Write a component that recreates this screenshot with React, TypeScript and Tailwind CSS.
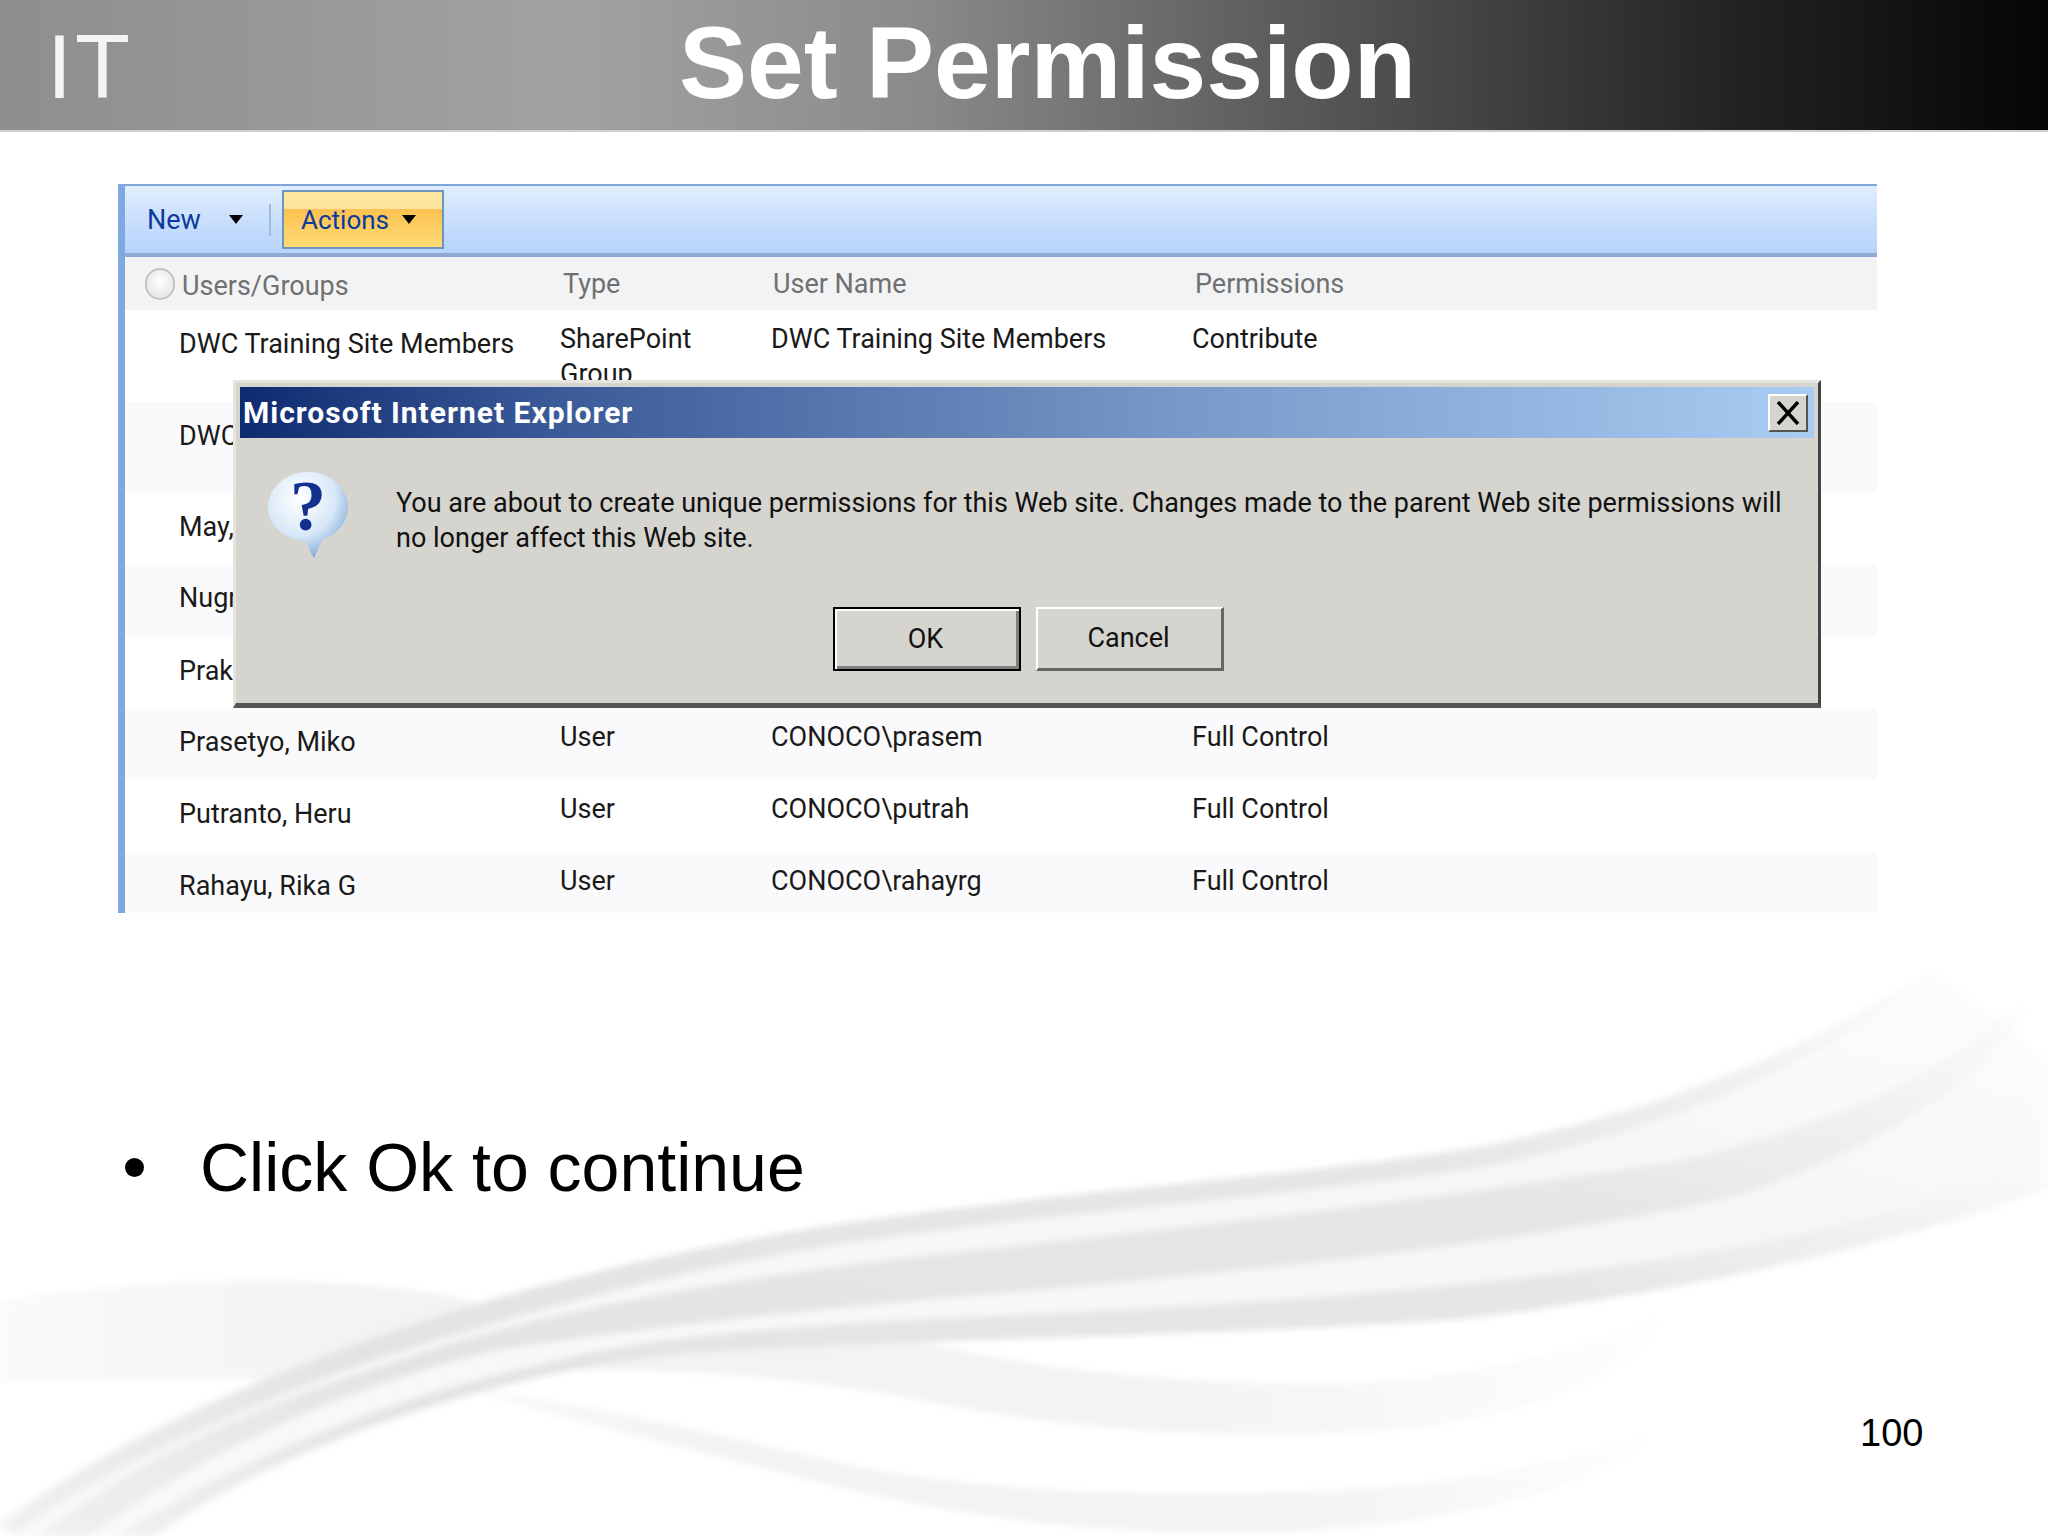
import React from "react";

const Arrow = () => (
  <svg width="16" height="12" viewBox="0 0 16 12" className="shrink-0">
    <polygon points="1,1 15,1 8,10" fill="#000" />
  </svg>
);

type Row = { name: string; type?: string; user?: string; perm?: string; h: string; alt: boolean };

const rows: Row[] = [
  { name: "DWC Training Site Members", type: "SharePoint Group", user: "DWC Training Site Members", perm: "Contribute", h: "h-[92px]", alt: false },
  { name: "DWC", h: "h-[91px]", alt: true },
  { name: "May,", h: "h-[71px]", alt: false },
  { name: "Nugr", h: "h-[73px]", alt: true },
  { name: "Prak", h: "h-[71px]", alt: false },
  { name: "Prasetyo, Miko", type: "User", user: "CONOCO\\prasem", perm: "Full Control", h: "h-[72px]", alt: true },
  { name: "Putranto, Heru", type: "User", user: "CONOCO\\putrah", perm: "Full Control", h: "h-[72px]", alt: false },
  { name: "Rahayu, Rika G", type: "User", user: "CONOCO\\rahayrg", perm: "Full Control", h: "h-[61px]", alt: true },
];

const Waves = () => (
  <svg
    className="absolute left-0 bottom-0 w-[2048px] h-[636px]"
    viewBox="0 0 1568 1568"
    preserveAspectRatio="none"
  >
    <defs>
      <linearGradient id="g1" x1="0" y1="1" x2="1" y2="0">
        <stop offset="0" stopColor="#f0f0f2" />
        <stop offset="0.25" stopColor="#e3e3e5" />
        <stop offset="0.7" stopColor="#e6e6e8" />
        <stop offset="1" stopColor="#fbfbfc" />
      </linearGradient>
      <linearGradient id="g2" x1="0" y1="0" x2="1" y2="0">
        <stop offset="0" stopColor="#fafafb" />
        <stop offset="0.2" stopColor="#f3f3f5" />
        <stop offset="0.7" stopColor="#f3f3f5" />
        <stop offset="1" stopColor="#fefefe" />
      </linearGradient>
      <linearGradient id="g3" x1="0" y1="1" x2="1" y2="0">
        <stop offset="0" stopColor="#f9f9fa" />
        <stop offset="0.7" stopColor="#f6f6f7" />
        <stop offset="1" stopColor="#fdfdfe" />
      </linearGradient>
      <filter id="soft" x="-5%" y="-5%" width="110%" height="110%">
        <feGaussianBlur stdDeviation="4 8" />
      </filter>
    </defs>
    <g filter="url(#soft)">
      <path d="M0 990C100 930 260 920 350 980C450 1050 620 1060 720 1100C800 1160 920 1200 1040 1190C1150 1170 1230 1090 1275 1010C1270 1130 1200 1250 1090 1300C960 1340 820 1310 700 1230C600 1170 480 1140 360 1170C240 1190 100 1170 0 1190Z" fill="url(#g2)" />
      <path d="M350 1200C470 1250 560 1330 660 1400C760 1460 900 1480 1050 1450C1140 1425 1210 1380 1270 1310C1240 1420 1140 1530 1000 1555C840 1580 720 1510 620 1430C540 1360 440 1290 350 1200Z" fill="url(#g2)" />
      <path d="M0 1540C60 1390 150 1240 260 1110C350 1000 470 890 620 810C800 720 1000 680 1130 610C1260 530 1380 380 1480 170L1568 400V710C1470 830 1320 950 1130 1030C950 1075 700 1080 520 1120C360 1170 190 1390 120 1568H10Z" fill="url(#g3)" />
      <path d="M0 1540C60 1390 150 1240 260 1110C350 1000 470 890 620 810C800 720 1000 680 1130 610C1260 530 1380 380 1480 170C1400 400 1280 560 1150 650C1000 730 800 770 640 850C490 930 380 1040 290 1130C170 1270 70 1420 10 1568Z" fill="url(#g1)" />
      <path d="M30 1568C90 1410 180 1260 310 1130C400 1030 520 950 700 880C900 810 1100 740 1290 640C1420 540 1500 400 1550 250C1530 420 1450 600 1330 730C1180 840 1000 900 800 960C640 1000 480 1060 380 1110C260 1200 140 1390 70 1568Z" fill="url(#g1)" />
      <path d="M90 1568C170 1400 290 1230 420 1140C500 1070 640 1040 800 1020C1000 990 1180 940 1320 860C1440 790 1520 700 1568 630V710C1470 830 1320 950 1130 1030C950 1075 700 1080 520 1120C360 1170 190 1390 120 1568Z" fill="url(#g1)" />
    </g>
  </svg>
);

const Question = () => (
  <svg width="84" height="88" viewBox="0 0 84 88" className="shrink-0">
    <defs>
      <radialGradient id="bubble" cx="0.4" cy="0.3" r="0.8">
        <stop offset="0" stopColor="#ffffff" />
        <stop offset="0.55" stopColor="#d8e8f8" />
        <stop offset="0.85" stopColor="#8db4dc" />
        <stop offset="1" stopColor="#5d8fc4" />
      </radialGradient>
    </defs>
    <path
      d="M41 1C63 1 81 17 81 36C81 52 69 64 56 68C52 74 50 82 47 87C43 82 42 74 38 70C17 69 1 54 1 36C1 17 19 1 41 1Z"
      fill="url(#bubble)"
    />
    <text x="41" y="59" textAnchor="middle" fontFamily="'Liberation Serif', serif" fontWeight="700" fontSize="72" fill="#12318f">
      ?
    </text>
  </svg>
);

export default function App() {
  return (
    <div className="relative flex h-[1536px] w-[2048px] flex-col overflow-hidden bg-white font-['Liberation_Sans',sans-serif]">
      <Waves />

      <header className="relative flex h-[132px] shrink-0 items-center border-b-2 border-[#cfcfcf] bg-[linear-gradient(90deg,#8e8e8e_0%,#a2a2a2_28%,#8a8a8a_45%,#555555_65%,#222222_85%,#050505_100%)]">
        <div className="w-[679px] pt-[3px] pl-[47px] text-[90px] leading-none tracking-[3px] whitespace-nowrap text-white/90">IT</div>
        <h1 className="pb-[5px] text-[102px] leading-none font-bold whitespace-nowrap text-white">Set Permission</h1>
      </header>

      <section className="relative mt-[52px] ml-[118px] w-[1759px] shrink-0 border-l-[7px] border-[#7fa8e0] font-['Roboto',sans-serif] text-[27px] leading-[35px] text-[#1a1a1a]">
        <div className="flex h-[73px] items-center border-t-2 border-b-4 border-t-[#7ea6d8] border-b-[#8fa9d4] bg-[linear-gradient(180deg,#e2eefe_0%,#c9dffc_50%,#b6d4fb_100%)] pl-[22px] text-[#0b3a9e]">
          <span className="w-[81px] pt-[2px]">New</span>
          <Arrow />
          <span className="mr-[11px] ml-[25px] h-[32px] w-[2px] bg-[#9bbbe0]" />
          <div className="flex h-[59px] w-[162px] items-center border-2 border-[#6f94bd] bg-[linear-gradient(180deg,#fee7a0_0%,#fee49a_30%,#fbc151_32%,#fedb74_100%)] pl-[17px]">
            <span className="w-[100px] pt-[2px] text-[26px]">Actions</span>
            <Arrow />
          </div>
        </div>

        <div className="grid h-[53px] grid-cols-[435px_211px_421px_1fr] bg-[#f2f3f5] text-[#707070]">
          <div className="flex items-center gap-[7px] pl-[20px]">
            <span className="block h-[32px] w-[30px] rounded-full border-2 border-[#c4c4c4] bg-[radial-gradient(circle_at_50%_40%,#ffffff,#e0e0e0)]" />
            <span className="pt-[6px]">Users/Groups</span>
          </div>
          <div className="pt-[10px] pl-[3px]">Type</div>
          <div className="pt-[10px] pl-[2px]">User Name</div>
          <div className="pt-[10px] pl-[3px]">Permissions</div>
        </div>

        {rows.map((r) => (
          <div
            key={r.name}
            className={`grid grid-cols-[435px_211px_421px_1fr] ${r.h} ${r.alt ? "bg-[#fafafc]" : "bg-white"}`}
          >
            <div className="pt-[17px] pl-[54px] whitespace-nowrap">{r.name}</div>
            <div className="w-[160px] pt-[12px]">{r.type}</div>
            <div className="pt-[12px] whitespace-nowrap">{r.user}</div>
            <div className="pt-[12px] whitespace-nowrap">{r.perm}</div>
          </div>
        ))}

        <div className="absolute top-[196px] left-[108px] flex h-[328px] w-[1588px] flex-col border-t-[3px] border-r-[3px] border-b-[5px] border-l-[3px] border-t-[#e6e4de] border-r-[#444444] border-b-[#555555] border-l-[#e6e4de] bg-[#d6d4ce] p-[4px] text-[#111111]">
          <div className="flex h-[51px] shrink-0 items-center justify-between bg-[linear-gradient(90deg,#0f2b70_0%,#3b5a98_20%,#7b9ccb_62%,#a8ccf2_100%)] pr-[6px] pl-[3px] font-['Roboto',sans-serif] text-[30px] font-bold tracking-[1px] text-white">
            <span className="whitespace-nowrap">Microsoft Internet Explorer</span>
            <div className="flex h-[38px] w-[40px] items-center justify-center border-t-2 border-r-2 border-b-2 border-l-2 border-t-white border-r-[#555555] border-b-[#555555] border-l-white bg-[#d6d4ce]">
              <svg width="24" height="24" viewBox="0 0 24 24">
                <path d="M2 1L22 23M22 1L2 23" stroke="#000" strokeWidth="3.5" fill="none" />
              </svg>
            </div>
          </div>
          <div className="flex gap-[45px] pt-[33px] pl-[27px]">
            <Question />
            <p className="pt-[15px] text-[27px] leading-[35px] whitespace-nowrap">
              You are about to create unique permissions for this Web site. Changes made to the parent Web site permissions will
              <br />
              no longer affect this Web site.
            </p>
          </div>
          <div className="absolute top-[224px] left-[597px] flex gap-[15px] text-[27px]">
            <div className="flex h-[64px] w-[188px] items-center justify-center border-2 border-black bg-[#d6d4ce] pr-[3px] shadow-[inset_2px_2px_0_#fff,inset_-3px_-3px_0_#808080]">OK</div>
            <div className="flex h-[64px] w-[188px] items-center justify-center border-t-2 border-r-[3px] border-b-[3px] border-l-2 border-t-white border-r-[#666666] border-b-[#666666] border-l-white bg-[#d6d4ce] pr-[2px]">Cancel</div>
          </div>
        </div>
      </section>

      <div className="relative mt-[214px] flex items-center pl-[125px] text-[68px] leading-[80px] text-black">
        <span className="h-[19px] w-[19px] rounded-full bg-black" />
        <span className="ml-[56px] whitespace-nowrap">Click Ok to continue</span>
      </div>

      <div className="relative mt-[204px] pl-[1860px] text-[38px] leading-[44px] text-black">100</div>
    </div>
  );
}
